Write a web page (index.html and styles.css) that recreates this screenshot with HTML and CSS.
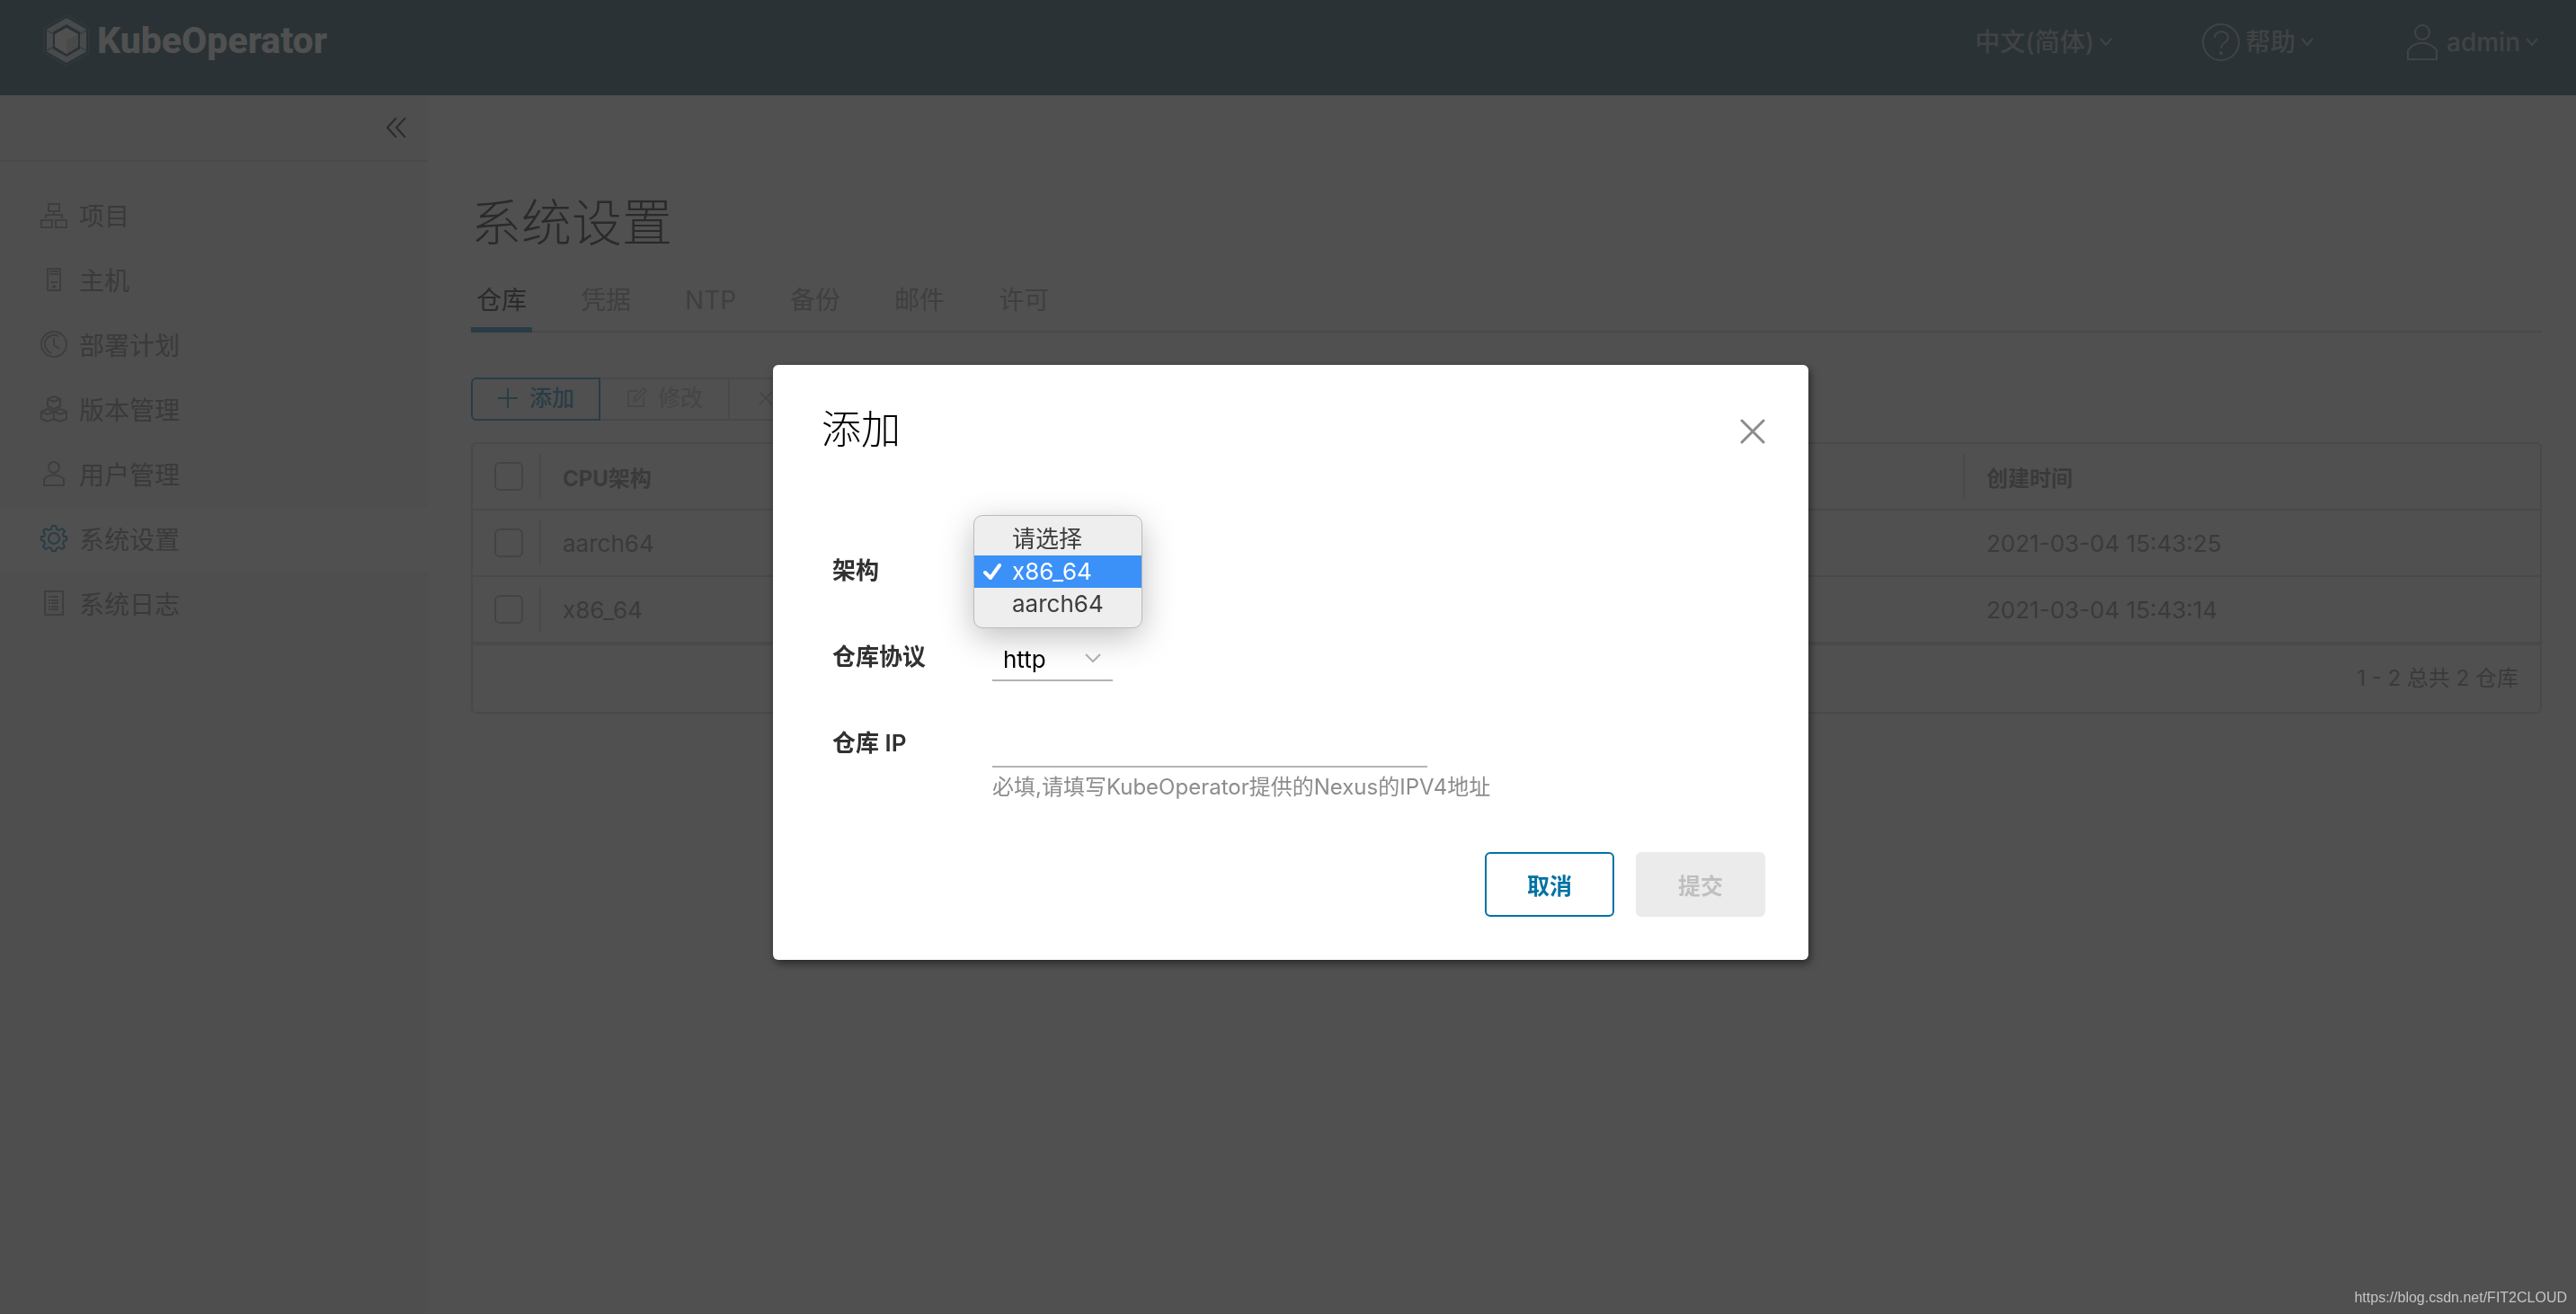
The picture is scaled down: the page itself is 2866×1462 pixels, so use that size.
FILE: index.html
```html
<!DOCTYPE html>
<html lang="zh-CN">
<head>
    <meta charset="UTF-8">
    <meta name="viewport" content="width=device-width, initial-scale=1.0">
    <title>KubeOperator</title>
    <link rel="stylesheet" href="styles.css">
</head>
<body>
    <div class="app">
        <header class="header">
            <a class="logo" href="#">
                <svg class="logo-mark" viewBox="0 0 52 58">
                    <path d="M26 1 51 15v28L26 57 1 43V15z" fill="none" stroke="#fff" stroke-opacity=".3"/>
                    <path fill-rule="evenodd" d="M26 4 48 16.500v25L26 54 4 41.500v-25zM26 11 11 19.500v19L26 47l15-8.500v-19z" fill="#fff" fill-opacity=".8" stroke="none"/>
                    <path d="M4 18l8 4M48 18l-8 4M4 40l8-4M48 40l-8-4" stroke="#00364d"/>
                    <path d="M26 15 39 22v14L26 44 13 36V22z" fill="#fff" stroke="none"/>
                    <path d="M26 29l13-7v14l-13 8z" fill="#ccc" stroke="none"/>
                </svg>
                <span>KubeOperator</span>
            </a>
            <nav class="header-actions">
                <button class="header-btn" type="button">
                    <span>中文(简体)</span>
                    <svg class="caret" viewBox="0 0 14 10"><path d="M1 1l6 7 6-7"/></svg>
                </button>
                <button class="header-btn" type="button">
                    <svg class="header-icon" viewBox="0 0 42 42"><circle cx="21" cy="21" r="20"/><path d="M14 16c0-9 15-9 15 0 0 6-8 5-8 12"/><circle cx="21" cy="33" r="1"/></svg>
                    <span>帮助</span>
                    <svg class="caret" viewBox="0 0 14 10"><path d="M1 1l6 7 6-7"/></svg>
                </button>
                <button class="header-btn" type="button">
                    <svg class="header-icon" viewBox="0 0 42 42"><circle cx="21" cy="10" r="8"/><path d="M5 40V30c8-11 24-11 32 0v10z"/></svg>
                    <span>admin</span>
                    <svg class="caret" viewBox="0 0 14 10"><path d="M1 1l6 7 6-7"/></svg>
                </button>
            </nav>
        </header>

        <div class="body">
            <aside class="sidebar">
                <div class="sidebar-top">
                    <button class="collapse" type="button" aria-label="收起">
                        <svg viewBox="0 0 22 22"><path d="M11 0 1 11l10 11M21 0 11 11l10 11"/></svg>
                    </button>
                </div>
                <nav class="menu">
                    <a class="menu-item" href="#">
                        <svg viewBox="0 0 30 30"><path d="M9 3h12v8H9zM1 21h12v8H1zM17 21h12v8H17zM15 11v5M6 19v-4h18v4"/></svg>
                        项目
                    </a>
                    <a class="menu-item" href="#">
                        <svg viewBox="0 0 30 30"><path d="M8 3h14v24H8zM10 6h10M10 9h10M11 18h8"/><circle cx="15" cy="23" r="1"/></svg>
                        主机
                    </a>
                    <a class="menu-item" href="#">
                        <svg viewBox="0 0 30 30"><circle cx="15" cy="15" r="14"/><path d="M15 8v8l6 4M20 6C12 2 5 8 5 15c0 5 3 8 7 10"/></svg>
                        部署计划
                    </a>
                    <a class="menu-item" href="#">
                        <svg viewBox="0 0 30 30"><path d="M15 1l7 3v8l-7 3-7-3V4zM8 4l7 3 7-3M8 15l7 3v8l-7 3-7-3v-8zM1 18l7 3 7-3M22 15l7 3v8l-7 3-7-3v-8zM15 18l7 3 7-3"/></svg>
                        版本管理
                    </a>
                    <a class="menu-item" href="#">
                        <svg viewBox="0 0 30 30"><circle cx="15" cy="8" r="6"/><path d="M4 28v-7c6-6 16-6 22 0v7z"/></svg>
                        用户管理
                    </a>
                    <a class="menu-item active" href="#">
                        <svg viewBox="0 0 30 30"><circle cx="15" cy="15" r="6"/><path d="M13 1h4l1 4 3 1 3-2 3 3-2 3 1 3 3 0v4l-3 1-1 3 2 3-3 3-3-2-3 1-1 3h-4l-1-3-3-1-3 2-3-3 2-3-1-3-3-1v-4l3 0 1-3-2-3 3-3 3 2 3-1z"/></svg>
                        系统设置
                    </a>
                    <a class="menu-item" href="#">
                        <svg viewBox="0 0 30 30"><path d="M5 2h20v26H5zM9 8h2M9 12h2M9 15h2M9 19h2M9 22h2M12 8h8M12 12h8M12 15h8M12 19h8M12 22h8"/></svg>
                        系统日志
                    </a>
                </nav>
            </aside>

            <main class="content">
                <h1>系统设置</h1>
                <nav class="tabs">
                    <a class="tab active" href="#">仓库</a>
                    <a class="tab" href="#">凭据</a>
                    <a class="tab" href="#">NTP</a>
                    <a class="tab" href="#">备份</a>
                    <a class="tab" href="#">邮件</a>
                    <a class="tab" href="#">许可</a>
                </nav>
                <div class="toolbar">
                    <button class="tool primary" type="button">
                        <svg viewBox="0 0 24 24"><path d="M12 1v22M1 12h22"/></svg>
                        添加
                    </button>
                    <button class="tool" type="button" disabled>
                        <svg viewBox="0 0 24 24"><path d="M14 4H3v17h17V11M9 16l1-5L20 1l3 3-10 10z"/></svg>
                        修改
                    </button>
                    <button class="tool" type="button" disabled>
                        <svg viewBox="0 0 24 24"><path d="M5 5l14 14M19 5 5 19"/></svg>
                        删除
                    </button>
                </div>
                <div class="datagrid">
                    <table>
                        <thead>
                            <tr>
                                <th class="check"><input type="checkbox" aria-label="全选"></th>
                                <th class="arch">CPU架构</th>
                                <th class="created">创建时间</th>
                            </tr>
                        </thead>
                        <tbody>
                            <tr>
                                <td class="check"><input type="checkbox" aria-label="aarch64"></td>
                                <td>aarch64</td>
                                <td>2021-03-04 15:43:25</td>
                            </tr>
                            <tr>
                                <td class="check"><input type="checkbox" aria-label="x86_64"></td>
                                <td>x86_64</td>
                                <td>2021-03-04 15:43:14</td>
                            </tr>
                        </tbody>
                    </table>
                    <div class="datagrid-footer">1 - 2 总共 2 仓库</div>
                </div>
            </main>
        </div>
    </div>

    <div class="backdrop">
        <form class="modal" role="dialog" aria-labelledby="modal-title">
            <div class="modal-header">
                <h2 id="modal-title">添加</h2>
                <button class="close" type="button" aria-label="关闭">
                    <svg viewBox="0 0 28 28"><path d="M2 2l24 24M26 2 2 26"/></svg>
                </button>
            </div>
            <div class="modal-body">
                <div class="field">
                    <label for="arch">架构</label>
                    <div class="control">
                        <select id="arch">
                            <option>请选择</option>
                            <option selected>x86_64</option>
                            <option>aarch64</option>
                        </select>
                        <!-- opened list of the select -->
                        <ul class="options" role="listbox">
                            <li role="option">请选择</li>
                            <li class="selected" role="option" aria-selected="true">
                                <svg viewBox="0 0 20 20"><path d="M2 11l6 6L18 3"/></svg>
                                x86_64
                            </li>
                            <li role="option">aarch64</li>
                        </ul>
                    </div>
                </div>
                <div class="field">
                    <label for="protocol">仓库协议</label>
                    <div class="control">
                        <select id="protocol">
                            <option selected>http</option>
                            <option>https</option>
                        </select>
                        <svg class="select-caret" viewBox="0 0 18 12"><path d="M1 2l8 8 8-8"/></svg>
                    </div>
                </div>
                <div class="field">
                    <label for="ip">仓库 IP</label>
                    <div class="control">
                        <input type="text" id="ip">
                        <div class="hint">必填,请填写KubeOperator提供的Nexus的IPV4地址</div>
                    </div>
                </div>
            </div>
            <div class="modal-footer">
                <button class="btn" type="button">取消</button>
                <button class="btn" type="submit" disabled>提交</button>
            </div>
        </form>
    </div>

    <div class="watermark">https://blog.csdn.net/FIT2CLOUD</div>
</body>
</html>
```
FILE: styles.css
```css
* {
    box-sizing: border-box;
}

body {
    margin: 0;
    font-family: Inter, "Noto Sans CJK SC", sans-serif;
    font-size: 26px;
    color: #6b6b6b;
    background-color: #fff;
}

button, input, select {
    font: inherit;
    color: inherit;
}

button {
    padding: 0;
    border: none;
    background: none;
    cursor: pointer;
}

a {
    color: inherit;
    text-decoration: none;
}

svg {
    display: block;
    flex: none;
    fill: none;
    stroke: currentColor;
    stroke-width: 2;
}

.app {
    display: flex;
    flex-direction: column;
    min-height: 100vh;
}

/* header */

.header {
    display: flex;
    justify-content: space-between;
    align-items: flex-start;
    height: 106px;
    padding: 16px 42px 0 48px;
    background-color: #00364d;
    color: #9daab0;
}

.logo {
    display: flex;
    align-items: center;
    gap: 8px;
    font-family: Roboto, sans-serif;
    font-size: 41px;
    font-weight: 800;
    line-height: 58px;
    color: #fff;
}

.logo-mark {
    width: 52px;
    height: 58px;
    stroke-width: 1;
}

.header-actions {
    display: flex;
    gap: 100px;
    font-size: 28px;
    font-weight: 500;
    line-height: 62px;
}

.header-btn {
    display: flex;
    align-items: center;
    gap: 6px;
}

.header-icon {
    width: 42px;
    height: 42px;
}

.caret {
    width: 14px;
    height: 10px;
}

.body {
    display: flex;
    flex: 1;
}

/* sidebar */

.sidebar {
    flex: none;
    width: 476px;
    background-color: #eee;
}

.sidebar-top {
    display: flex;
    justify-content: flex-end;
    height: 74px;
    padding: 25px 24px 0 0;
    border-bottom: 2px solid #d4d4d4;
}

.collapse {
    align-self: flex-start;
    color: #000;
}

.collapse svg {
    width: 22px;
    height: 22px;
}

.menu {
    padding-top: 24px;
}

.menu-item {
    display: flex;
    align-items: center;
    gap: 13px;
    height: 72px;
    padding: 0 0 2px 45px;
    font-size: 28px;
}

.menu-item svg {
    width: 30px;
    height: 30px;
    color: #858585;
}

.menu-item.active {
    background-color: #fff;
}

.menu-item.active svg {
    color: #0079b8;
}

/* content */

.content {
    flex: 1;
    padding: 100px 38px 0 48px;
}

h1 {
    margin: 0;
    font-size: 56px;
    font-weight: 200;
    line-height: 84px;
    color: #000;
}

.tabs {
    display: flex;
    gap: 48px;
    height: 80px;
    border-bottom: 2px solid #ccc;
    font-size: 28px;
    line-height: 88px;
    color: #8c8c8c;
}

.tab {
    height: 80px;
    padding: 0 6px;
}

.tab.active {
    color: #000;
    border-bottom: 6px solid #0079b8;
}

.toolbar {
    display: flex;
    margin-top: 50px;
    font-size: 25px;
    font-weight: 500;
    line-height: 40px;
}

.tool {
    display: flex;
    align-items: center;
    justify-content: center;
    gap: 12px;
    width: 144px;
    height: 48px;
    padding-bottom: 2px;
    border: 2px solid #ccc;
    border-left: none;
    color: #bbb;
}

.tool svg {
    width: 24px;
    height: 24px;
}

.tool.primary {
    border: 2px solid #0079b8;
    border-radius: 6px 0 0 6px;
    color: #0079b8;
}

.datagrid {
    margin-top: 24px;
    border: 2px solid #ccc;
    border-radius: 6px;
}

table {
    width: 100%;
    border-spacing: 0;
    table-layout: fixed;
}

th, td {
    height: 74px;
    padding: 0 24px;
    border-bottom: 2px solid #ccc;
    text-align: left;
}

th {
    font-size: 24px;
    font-weight: 700;
}

tbody tr:last-child td {
    height: 76px;
    border-bottom-width: 4px;
}

.check {
    width: 76px;
}

.created {
    width: 640px;
}

/* short separators between the columns */
th:not(:last-child), .check {
    background: linear-gradient(#ccc, #ccc) right center / 2px 50px no-repeat;
}

input[type="checkbox"] {
    display: block;
    width: 32px;
    height: 32px;
    margin: 0;
    appearance: none;
    border: 2px solid #aaa;
    border-radius: 6px;
}

.datagrid-footer {
    height: 74px;
    padding-right: 24px;
    font-size: 24px;
    line-height: 74px;
    text-align: right;
}

/* modal */

.backdrop {
    position: fixed;
    inset: 0;
    display: flex;
    align-items: center;
    justify-content: center;
    padding: 12px 0 0 6px;
    background-color: rgba(49, 49, 49, 0.85);
}

.modal {
    width: 1152px;
    padding: 48px;
    border-radius: 6px;
    background-color: #fff;
    box-shadow: 2px 4px 10px rgba(0, 0, 0, 0.5);
    color: #000;
}

.modal-header {
    display: flex;
    justify-content: space-between;
    align-items: flex-end;
    padding: 0 0 0 6px;
}

h2 {
    margin: 0;
    font-size: 44px;
    font-weight: 200;
    line-height: 48px;
}

.close {
    padding-bottom: 8px;
    color: #8c8c8c;
}

.close svg {
    width: 28px;
    height: 28px;
    stroke-width: 3;
    stroke-linecap: round;
}

.modal-body {
    padding: 78px 18px 0;
}

.field {
    display: flex;
    height: 96px;
}

.field label {
    width: 178px;
    font-weight: 600;
    line-height: 110px;
    color: #313131;
}

.field .control {
    position: relative;
    flex: 1;
    padding-top: 34px;
}

select, input[type="text"] {
    display: block;
    height: 48px;
    margin: 0;
    border: none;
    border-bottom: 2px solid #b3b3b3;
    border-radius: 0;
    outline: none;
    background: none;
    appearance: none;
}

select {
    width: 134px;
    padding: 0 0 0 12px;
}

input[type="text"] {
    width: 484px;
}

.select-caret {
    position: absolute;
    top: 50px;
    left: 103px;
    width: 18px;
    height: 12px;
    color: #b3b3b3;
}

.hint {
    font-size: 24px;
    line-height: 44px;
    color: #8c8c8c;
}

.options {
    position: absolute;
    z-index: 1;
    top: -7px;
    left: -21px;
    width: 188px;
    margin: 0;
    padding: 8px 0;
    border: 1px solid #bbb;
    border-radius: 10px;
    background-color: #eee;
    box-shadow: 0 10px 36px rgba(0, 0, 0, 0.25);
    list-style: none;
    line-height: 36px;
    color: #3c3c3c;
}

.options li {
    display: flex;
    align-items: center;
    gap: 12px;
    padding-left: 42px;
}

.options .selected {
    padding-left: 10px;
    background-color: #3b91f8;
    color: #fff;
}

.options svg {
    width: 20px;
    height: 20px;
    stroke-width: 4;
    stroke-linecap: round;
    stroke-linejoin: round;
}

.modal-footer {
    display: flex;
    justify-content: flex-end;
    gap: 24px;
    padding-top: 80px;
}

.btn {
    width: 144px;
    height: 72px;
    border: 2px solid #0072a3;
    border-radius: 6px;
    font-size: 25px;
    font-weight: 600;
    color: #0072a3;
}

.btn:disabled {
    border-color: #ebebeb;
    background-color: #ebebeb;
    color: #bfbfbf;
}

.watermark {
    position: fixed;
    right: 10px;
    bottom: 9px;
    font-family: "Liberation Sans", sans-serif;
    font-size: 16px;
    color: #c4c4c4;
}
```
